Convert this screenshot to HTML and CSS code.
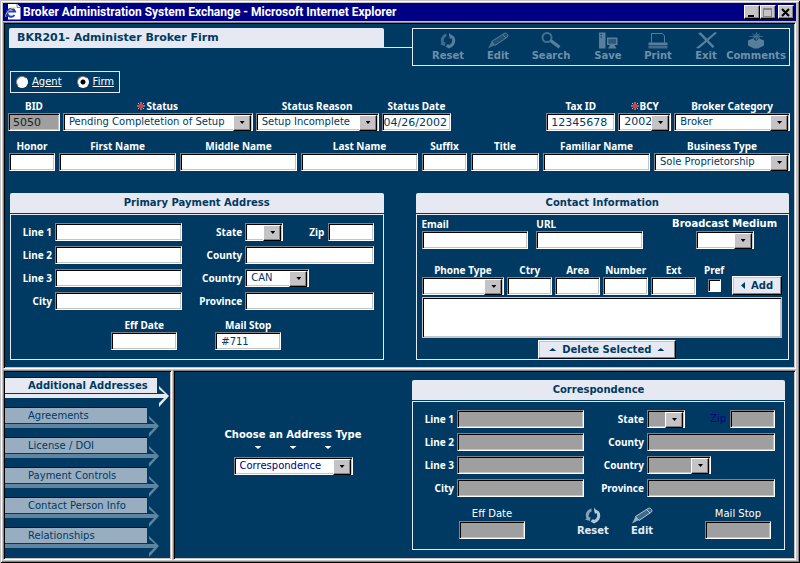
FILE: index.html
```html
<!DOCTYPE html>
<html lang="en">
<head>
<meta charset="utf-8">
<title>Broker Administration System Exchange</title>
<link rel="stylesheet" href="styles.css">
</head>
<body>
<svg class="defs" aria-hidden="true">
  <symbol id="i-reset" viewBox="0 0 22 17">
    <path d="M4.500 11.500C2.500 7 5 2.500 9.500 1.500L9.500 4.500C7.500 5 6 7.500 7 10.500L8.500 10L8 14L3 12.500Z" opacity=".75"/>
    <path d="M12 .5L13 2L17 4.500C19.500 8.500 18 13.500 14 15.500L12 16.500L8.500 14.500L11 12L12 13C15 12 16 8.500 14.500 6L13 7L12 3Z"/>
  </symbol>
  <symbol id="i-edit" viewBox="0 0 22 17">
    <path d="M1 16.500L4.500 9.500L8 13Z" opacity=".8"/>
    <path d="M4.500 9.500L17 1.500C19 .3 22 2.500 20.500 5L8 13.500Z" opacity=".35"/>
    <path d="M4.500 9.500L17 1.500C19 .3 22 2.500 20.500 5L8 13.500Z M15.500 2.500L19 6" fill="none" stroke="currentColor"/>
  </symbol>
  <symbol id="i-search" viewBox="0 0 22 17">
    <circle cx="7" cy="5.500" r="4.500" fill="none" stroke="currentColor" stroke-width="2" opacity=".8"/>
    <path d="M10 8.500L12 7.500L20.500 14L18.500 16.500L10.500 10.500Z"/>
  </symbol>
  <symbol id="i-save" viewBox="0 0 22 17">
    <path d="M2 .5H8.500V16.500H2ZM3.500 2V3H5V2ZM3.500 4.500V5.500H5V4.500Z" fill-rule="evenodd"/>
    <path d="M10 5.500H20.500V13H17.500L19.500 16.500H11L13 13H10ZM11.500 7V11.500H19V7Z" fill-rule="evenodd"/>
    <path d="M11.500 7H19V11.500H11.500Z" opacity=".45"/>
  </symbol>
  <symbol id="i-print" viewBox="0 0 22 17">
    <path d="M4.500 10.500V1.500H15.500L17.500 4V10.500" fill="none" stroke="currentColor"/>
    <path d="M1.500 10.500H20.500V13H1.500Z"/>
    <path d="M1.500 13.500H20.500V16.500H1.500Z" opacity=".75"/>
  </symbol>
  <symbol id="i-exit" viewBox="0 0 22 17">
    <path d="M1 16L20 0L22 1L4 16.500ZM3 1L6 .5L19.500 14.500L17.500 16Z"/>
  </symbol>
  <symbol id="i-comments" viewBox="0 0 22 17">
    <path d="M3 8.500L8 6.500L11 9L14 6.500L19 8.500V13.500L13 16.500H9L3 13.500Z"/>
    <path d="M4.500 4.500H18M11.500 0V8M7.500 1.500L15 7M15 1.500L8 7M11.500 1.500L15 4.500L11.500 7L8 4.500Z" fill="none" stroke="currentColor" opacity=".65"/>
  </symbol>
  <symbol id="i-arrow" viewBox="0 0 12 21">
    <path d="M0 8H8L2 3V0L12 10L2 21V17L7 12H0Z"/>
  </symbol>
  <symbol id="star" viewBox="0 0 8 8">
    <path d="M4 0V8M0 4H8M1 1L7 7M7 1L1 7" stroke="#f8b8b8"/>
    <path d="M4 1V7M1 4H7M2 2L6 6M6 2L2 6" stroke="#e83030"/>
  </symbol>
</svg>
<div class="window">
  <header class="titlebar">
    <svg class="app-icon" viewBox="0 0 16 16" aria-hidden="true">
      <path d="M3 0H12L15.500 3V15.500H3Z" fill="#fff"/>
      <path d="M12 0V3.500H15.500" fill="none" stroke="#848284"/>
      <path d="M9.500 11A4 4 0 1 1 10 7.500H3" fill="none" stroke="#1c3cd8" stroke-width="2"/>
      <path d="M1 13C-1 10 6 3 10.500 4" fill="none" stroke="#d8c832"/>
    </svg>
    <span class="caption">Broker Administration System Exchange - Microsoft Internet Explorer</span>
    <button type="button" class="win-btn" aria-label="Minimize"><svg viewBox="0 0 13 11"><path d="M3 8H9V10H3Z"/></svg></button>
    <button type="button" class="win-btn" aria-label="Maximize"><svg viewBox="0 0 13 11"><path d="M2 1H11V10H2ZM3 3V9H10V3Z" fill="#848284" fill-rule="evenodd"/></svg></button>
    <button type="button" class="win-btn close" aria-label="Close"><svg viewBox="0 0 13 11"><path d="M3 2L10 9M10 2L3 9" stroke="#000" stroke-width="2"/></svg></button>
  </header>

  <main class="pane firm">
    <div class="head">
      <div class="head-title"><h1>BKR201- Administer Broker Firm</h1></div>
      <nav class="toolbar">
        <button type="button" class="tool"><svg><use href="#i-reset"/></svg>Reset</button>
        <button type="button" class="tool"><svg><use href="#i-edit"/></svg>Edit</button>
        <button type="button" class="tool"><svg><use href="#i-search"/></svg>Search</button>
        <button type="button" class="tool"><svg><use href="#i-save"/></svg>Save</button>
        <button type="button" class="tool"><svg><use href="#i-print"/></svg>Print</button>
        <button type="button" class="tool"><svg><use href="#i-exit"/></svg>Exit</button>
        <button type="button" class="tool"><svg><use href="#i-comments"/></svg>Comments</button>
      </nav>
    </div>

    <div class="kind">
      <label><input type="radio" name="kind"><span>Agent</span></label>
      <label><input type="radio" name="kind" checked><span>Firm</span></label>
    </div>

    <div class="row row-status">
      <div class="cell muted-fields"><label for="bid">BID</label><input id="bid" class="code" value="5050" readonly></div>
      <div class="cell"><label for="status"><svg class="req" viewBox="0 0 8 8"><use href="#star"/></svg>Status</label><span class="pick"><select id="status"><option>Pending Completetion of Setup</option></select></span></div>
      <div class="cell"><label for="reason">Status Reason</label><span class="pick"><select id="reason"><option>Setup Incomplete</option></select></span></div>
      <div class="cell"><label for="sdate">Status Date</label><input id="sdate" class="code date" value="04/26/2002"></div>
      <div></div>
      <div class="cell"><label for="tax">Tax ID</label><input id="tax" class="code" value="12345678"></div>
      <div class="cell"><label for="bcy"><svg class="req" viewBox="0 0 8 8"><use href="#star"/></svg>BCY</label><span class="pick"><select id="bcy" class="code"><option>2002</option></select></span></div>
      <div class="cell"><label for="cat">Broker Category</label><span class="pick"><select id="cat"><option>Broker</option></select></span></div>
    </div>

    <div class="row row-name">
      <div class="cell"><label for="honor">Honor</label><input id="honor"></div>
      <div class="cell"><label for="first">First Name</label><input id="first"></div>
      <div class="cell"><label for="middle">Middle Name</label><input id="middle"></div>
      <div class="cell"><label for="last">Last Name</label><input id="last"></div>
      <div class="cell"><label for="suffix">Suffix</label><input id="suffix"></div>
      <div class="cell"><label for="ttl">Title</label><input id="ttl"></div>
      <div class="cell"><label for="familiar">Familiar Name</label><input id="familiar"></div>
      <div class="cell"><label for="btype">Business Type</label><span class="pick"><select id="btype"><option>Sole Proprietorship</option></select></span></div>
    </div>

    <div class="panels">
      <section class="panel">
        <h2>Primary Payment Address</h2>
        <div class="box">
          <div class="address">
            <label for="p1">Line 1</label><input id="p1">
            <label for="pst">State</label>
            <div class="state-zip"><span class="pick"><select id="pst"><option></option></select></span><label for="pzip">Zip</label><input id="pzip"></div>
            <label for="p2">Line 2</label><input id="p2">
            <label for="pcounty">County</label><input id="pcounty">
            <label for="p3">Line 3</label><input id="p3">
            <label for="pcountry">Country</label><span class="pick country"><select id="pcountry"><option>CAN</option></select></span>
            <label for="pcity">City</label><input id="pcity">
            <label for="pprov">Province</label><input id="pprov">
          </div>
          <div class="extras centered">
            <div class="cell"><label for="peff">Eff Date</label><input id="peff"></div>
            <div class="cell"><label for="pmail">Mail Stop</label><input id="pmail" value="#711"></div>
          </div>
        </div>
      </section>

      <section class="panel">
        <h2>Contact Information</h2>
        <div class="box contact">
          <div class="web">
            <div class="cell start"><label for="email">Email</label><input id="email"></div>
            <div class="cell start"><label for="url">URL</label><input id="url"></div>
            <div></div>
            <div class="cell"><label for="medium" class="spaced">Broadcast Medium</label><span class="pick medium"><select id="medium"><option></option></select></span></div>
          </div>
          <div class="phone">
            <div class="cell"><label for="ptype">Phone Type</label><span class="pick"><select id="ptype"><option></option></select></span></div>
            <div class="cell"><label for="ctry">Ctry</label><input id="ctry"></div>
            <div class="cell"><label for="area">Area</label><input id="area"></div>
            <div class="cell"><label for="num">Number</label><input id="num"></div>
            <div class="cell"><label for="ext">Ext</label><input id="ext"></div>
            <div class="cell"><label for="pref">Pref</label><input type="checkbox" id="pref"></div>
            <button type="button" class="push"><i class="tri left"></i>Add</button>
          </div>
          <select class="list" size="2" multiple aria-label="Phone numbers"></select>
          <button type="button" class="push delete"><i class="tri up"></i>Delete Selected<i class="tri up"></i></button>
        </div>
      </section>
    </div>
  </main>

  <div class="lower">
    <nav class="pane side">
      <a href="#" class="tab active"><span>Additional Addresses</span><svg><use href="#i-arrow"/></svg></a>
      <a href="#" class="tab"><span>Agreements</span><svg><use href="#i-arrow"/></svg></a>
      <a href="#" class="tab"><span>License / DOI</span><svg><use href="#i-arrow"/></svg></a>
      <a href="#" class="tab"><span>Payment Controls</span><svg><use href="#i-arrow"/></svg></a>
      <a href="#" class="tab"><span>Contact Person Info</span><svg><use href="#i-arrow"/></svg></a>
      <a href="#" class="tab"><span>Relationships</span><svg><use href="#i-arrow"/></svg></a>
    </nav>
    <div class="pane detail">
      <div class="chooser">
        <label for="atype">Choose an Address Type</label>
        <div class="marks"><i class="tri down"></i><i class="tri down"></i><i class="tri down"></i></div>
        <span class="pick"><select id="atype"><option>Correspondence</option></select></span>
      </div>
      <section class="panel muted-fields">
        <h2>Correspondence</h2>
        <div class="box">
          <div class="address">
            <label for="c1">Line 1</label><input id="c1">
            <label for="cst">State</label>
            <div class="state-zip"><span class="pick"><select id="cst"><option></option></select></span><label for="czip" class="off">Zip</label><input id="czip"></div>
            <label for="c2">Line 2</label><input id="c2">
            <label for="ccounty">County</label><input id="ccounty">
            <label for="c3">Line 3</label><input id="c3">
            <label for="ccountry">Country</label><span class="pick country"><select id="ccountry"><option></option></select></span>
            <label for="ccity">City</label><input id="ccity">
            <label for="cprov">Province</label><input id="cprov">
          </div>
          <div class="extras split">
            <div class="cell plain"><label for="ceff">Eff Date</label><input id="ceff"></div>
            <div class="actions">
              <button type="button" class="tool lit"><svg><use href="#i-reset"/></svg>Reset</button>
              <button type="button" class="tool lit"><svg><use href="#i-edit"/></svg>Edit</button>
            </div>
            <div class="cell plain"><label for="cmail">Mail Stop</label><input id="cmail"></div>
          </div>
        </div>
      </section>
    </div>
  </div>
</div>
</body>
</html>
```

FILE: styles.css
```css
:root {
  --navy: #003a63;
  --pale: #e6e9f2;
  --face: #c6c3c6;
  --shade: #848284;
  --field: #fff;
  --sans: "DejaVu Sans", Verdana, sans-serif;
  --label: "Noto Sans", "Open Sans", sans-serif;
}

* { box-sizing: border-box; }

body {
  margin: 0;
  font: 10px/14px var(--sans);
  color: #fff;
}

.defs { position: absolute; width: 0; height: 0; }

input, select, button { font: inherit; margin: 0; border-radius: 0; min-width: 0; }
h1, h2 { margin: 0; }

/* Window frame */
.window {
  display: flex;
  flex-direction: column;
  min-height: 100vh;
  padding: 3px 4px 3px 3px;
  background: var(--face);
  box-shadow: inset 1px 1px #c6c3c6, inset -1px -1px #000, inset 2px 2px #fff, inset -2px -2px #848284;
}

.titlebar {
  display: flex;
  align-items: center;
  height: 18px;
  margin-bottom: 1px;
  padding: 0 2px;
  background: #000084;
}
.app-icon { width: 16px; height: 16px; margin-right: 2px; }
.caption { flex: 1; font: bold 12px/18px Roboto, "Liberation Sans", sans-serif; white-space: nowrap; }
.win-btn {
  width: 16px;
  height: 14px;
  padding: 0;
  border: 1px solid;
  border-color: #fff #000 #000 #fff;
  background: var(--face);
  box-shadow: inset -1px -1px var(--shade);
}
.win-btn.close { margin-left: 2px; }
.win-btn svg { display: block; width: 13px; height: 11px; }

.pane {
  border: 1px solid;
  border-color: var(--shade) #fff #fff var(--shade);
  background: var(--navy);
  box-shadow: inset 1px 1px #000, inset -1px -1px var(--face);
}
.firm { padding: 5px 5px 7px; flex: 1 0 auto; }

/* Heading and toolbar */
.head { display: grid; grid-template-columns: 403fr 378fr; }
.head-title { height: 20px; border-bottom: 1px solid var(--pale); }
h1 {
  width: 93%;
  height: 19px;
  padding-left: 8px;
  border-radius: 2px 2px 0 0;
  background: var(--pale);
  color: var(--navy);
  font-size: 11px;
  line-height: 19px;
}
.toolbar {
  display: grid;
  grid-template-columns: 70fr 30fr 76fr 38fr 62fr 34fr 66fr;
  height: 38px;
  padding-top: 3px;
  border: 1px solid var(--pale);
}
.tool {
  display: flex;
  flex-direction: column;
  align-items: center;
  padding: 0;
  border: 0;
  background: none;
  color: #6f8fa9;
  font-weight: bold;
  line-height: 14px;
}
.tool svg { width: 22px; height: 17px; fill: currentColor; opacity: .8; }
.tool.lit { color: var(--pale); }

.kind {
  display: flex;
  gap: 15px;
  width: fit-content;
  height: 22px;
  margin: 5px 0 0 1px;
  padding: 0 5px;
  border: 1px solid var(--pale);
}
.kind label { display: flex; align-items: center; gap: 4px; text-decoration: underline; }
.kind input {
  appearance: none;
  width: 12px;
  height: 12px;
  border: 1px solid;
  border-color: var(--shade) #fff #fff var(--shade);
  border-radius: 50%;
  background: #fff;
}
.kind input:checked { background: radial-gradient(#000 2px, #fff 3px); }

/* Fields */
label { font-weight: bold; white-space: nowrap; }
.cell label, .address label { font-family: var(--label); }
.kind label { font-weight: normal; }
.cell { display: flex; flex-direction: column; align-items: center; min-width: 0; }
.cell > input:not([type="checkbox"]), .cell > .pick { width: 100%; }
.start { align-items: flex-start; }
.cell .spaced, .cell.plain label { font-family: var(--sans); }
.plain label { font-weight: normal; }

input:not([type="radio"]):not([type="checkbox"]), select {
  width: 100%;
  height: 18px;
  padding: 0 5px;
  border: 1px solid;
  border-color: var(--shade) #fff #fff var(--shade);
  background: var(--field);
  box-shadow: inset 1px 1px #000, inset -1px -1px var(--face);
  color: var(--navy);
  outline: none;
}
.muted-fields { --field: #9f9f9f; }
select { appearance: none; display: block; }
.row .code { font-size: 11px; }
.row input.code { padding: 0 4px; }
.row input.date { padding: 0 1px; }
.row .muted-fields input { color: #202020; }

.pick { display: grid; }
.pick > *, .pick::before, .pick::after { grid-area: 1 / 1; }
.pick::before, .pick::after { content: ""; z-index: 1; justify-self: end; pointer-events: none; }
.pick::before {
  width: 16px;
  height: 14px;
  margin: 2px 2px 0 0;
  border: 1px solid;
  border-color: #fff #000 #000 #fff;
  background: var(--face);
  box-shadow: inset -1px -1px var(--shade);
}
.pick::after {
  width: 5px;
  height: 3px;
  margin: 8px 8px 0 0;
  background: #000;
  clip-path: polygon(0 0, 100% 0, 50% 100%);
}

.row { display: grid; }
.row-status {
  grid-template-columns: 52fr 190fr 123fr 70fr 89fr 69fr 53fr 116fr;
  gap: 3px;
  margin: 6px 0 0 -1px;
}
.row-name {
  grid-template-columns: 46fr 117fr 117fr 117fr 45fr 68fr 107fr 136fr;
  gap: 4px;
  margin-top: 8px;
}
.req { width: 8px; height: 8px; margin-right: 1px; }

/* Panels */
.panels { display: grid; grid-template-columns: 1fr 1fr; gap: 32px; margin: 22px 1px 0 1px; }
.panel { display: flex; flex-direction: column; min-width: 0; }
h2 {
  height: 20px;
  margin-bottom: 1px;
  border-radius: 2px 2px 0 0;
  background: var(--pale);
  color: var(--navy);
  font-size: 10px;
  line-height: 20px;
  text-align: center;
}
.box { flex: 1; height: 147px; padding: 8px 9px 0 8px; border: 1px solid var(--pale); }
.address {
  display: grid;
  grid-template-columns: 33px 127fr 57px 128fr;
  gap: 5px 3px;
  align-items: center;
}
.address label { text-align: right; }
.state-zip { display: grid; grid-template-columns: 38fr 37fr 45fr; gap: 4px; align-items: center; }
.address .off { color: #000084; font: 10px/14px var(--sans); }
.country { width: 50%; }
.extras { display: flex; }
.extras .cell { width: 66px; }
.centered { gap: 38px; justify-content: center; margin-top: 8px; }
.split { justify-content: space-between; margin-top: 10px; padding: 0 4px 0 38px; }
.actions { display: flex; gap: 22px; }

.contact { display: flex; flex-direction: column; padding: 2px 6px 0 5px; }
.web { display: grid; grid-template-columns: 107fr 107fr 8fr 115fr; gap: 8px; }
.cell > .medium { width: 58px; }
.phone {
  display: grid;
  grid-template-columns: 83fr 45fr 45fr 45fr 45fr 30fr 50fr;
  gap: 3px;
  margin-top: 14px;
  align-items: end;
}
.phone .cell { align-self: start; }
input[type="checkbox"] {
  appearance: none;
  width: 13px;
  height: 13px;
  margin-top: 2px;
  border: 1px solid;
  border-color: var(--shade) #fff #fff var(--shade);
  background: #fff;
  box-shadow: inset 1px 1px #000;
}
.contact .list { height: 41px; margin-top: 2px; border-color: var(--face); overflow: hidden; }

.push {
  display: flex;
  align-items: center;
  justify-content: center;
  gap: 6px;
  height: 19px;
  padding: 0;
  border: 1px solid;
  border-color: #fff #000 #000 #fff;
  background: var(--pale);
  box-shadow: inset -1px -1px var(--shade), inset 1px 1px var(--face);
  color: var(--navy);
  font-weight: bold;
}
.delete { align-self: center; width: 138px; margin: 2px 0 0 10px; }
.tri { display: block; background: currentColor; }
.tri.up { width: 7px; height: 3px; clip-path: polygon(50% 0, 100% 100%, 0 100%); }
.tri.down { width: 7px; height: 3px; clip-path: polygon(0 0, 100% 0, 50% 100%); }
.tri.left { width: 4px; height: 7px; clip-path: polygon(100% 0, 100% 100%, 0 50%); }

/* Lower panes */
.lower {
  display: grid;
  grid-template-columns: 169px minmax(0, 1fr);
  gap: 1px;
  min-height: 190px;
  margin-top: 1px;
}
.side { padding: 6px 2px 0 1px; }
.tab {
  display: flex;
  height: 30px;
  padding-right: 10px;
  color: #5f84a0;
  text-decoration: none;
}
.tab span {
  flex: 1;
  height: 21px;
  padding-left: 23px;
  border-top: 1px solid #000084;
  border-bottom: 4px solid;
  background: linear-gradient(#98adc0, #98adc0) no-repeat 0 0 / 100% 15px;
  line-height: 16px;
  white-space: nowrap;
}
.tab span::first-line { color: var(--navy); }
.tab svg { width: 12px; height: 21px; margin-top: 9px; fill: currentColor; }
.tab.active { padding-right: 0; color: var(--pale); font-weight: bold; }
.tab.active span { background-image: linear-gradient(var(--pale), var(--pale)); }

.detail { display: grid; grid-template-columns: 238fr 373fr; padding: 9px 10px 9px 0; }
.chooser { display: flex; flex-direction: column; align-items: center; padding-top: 48px; }
.chooser .marks { display: flex; gap: 28px; margin: 4px 0 8px; }
.chooser .pick { width: 119px; }
.chooser .pick select { color: #000084; }
```
